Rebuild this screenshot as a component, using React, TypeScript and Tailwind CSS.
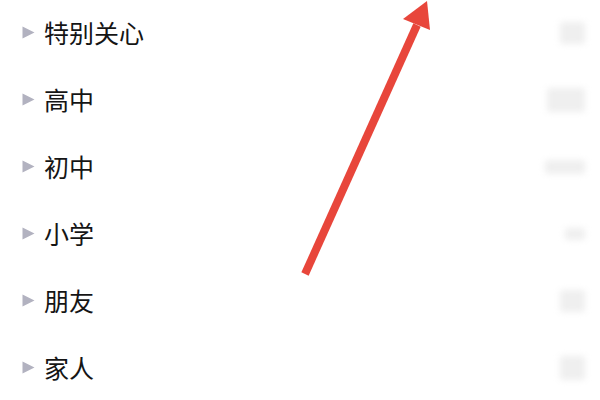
const groups = [
  { name: "特别关心", blob: "w-[25px] h-[22px]" },
  { name: "高中", blob: "w-[38px] h-[24px]" },
  { name: "初中", blob: "w-[40px] h-[14px]" },
  { name: "小学", blob: "w-[20px] h-[12px]" },
  { name: "朋友", blob: "w-[25px] h-[22px]" },
  { name: "家人", blob: "w-[25px] h-[24px]" },
]

export default function App() {
  return (
    <div
      className="relative w-[600px] h-[400px] overflow-hidden bg-white"
      style={{ fontFamily: '"Noto Sans CJK SC", "Noto Sans", sans-serif' }}
    >
      <div className="flex flex-col -mt-[1px]">
        {groups.map((g) => (
          <div key={g.name} className="flex h-[67px] items-center justify-between pl-[22px] pr-[15px]">
            <div className="flex items-center gap-[9px]">
              <svg width="13" height="13" viewBox="0 0 13 13">
                <path d="M0.5 0.5 L12.5 6.5 L0.5 12.5 Z" fill="#b2b2c0" />
              </svg>
              <span className="text-[25px] leading-none text-[#151515]">{g.name}</span>
            </div>
            <div className={`${g.blob} rounded-[2px] bg-[#efefef] blur-[3px]`} />
          </div>
        ))}
      </div>

      <svg className="absolute left-0 top-0" width="600" height="400" viewBox="0 0 600 400">
        <line x1="305" y1="274" x2="417" y2="25" stroke="#e8463b" strokeWidth="8" strokeLinecap="butt" />
        <path d="M427 1 L403 19 L430 30 Z" fill="#e8463b" />
      </svg>
    </div>
  )
}
